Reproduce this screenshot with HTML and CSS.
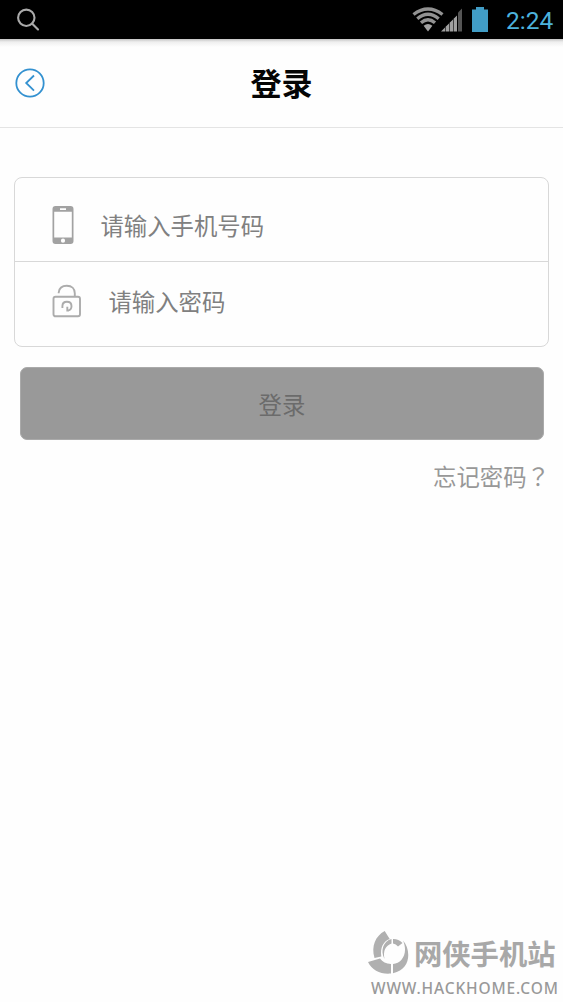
FILE: index.html
```html
<!DOCTYPE html>
<html lang="zh-CN">
<head>
<meta charset="utf-8">
<title>登录</title>
<link rel="stylesheet" href="styles.css">
</head>
<body>
<div class="screen">
  <div class="status">
    <svg class="status-search" width="24" height="24" viewBox="0 0 24 24"><circle cx="10.3" cy="9.8" r="8.2"/><path d="M16 15.5L22 21.5"/></svg>
    <div class="status-right">
      <svg class="wifi" width="32" height="25" viewBox="0 0 32 25"><path d="M1.5 7.5Q16-3.5 30.5 7.5M5.3 11.7Q16 3 26.7 11.7M9 15.8Q16 9.8 23 15.8"/><path class="dot" d="M11.6 18.8Q16 15.2 20.4 18.8L16 24.5Z"/></svg>
      <svg class="signal" width="22" height="25" viewBox="0 0 22 25"><path d="M0 24.5L4 20.5V24.5ZM4.6 19.8L8 16.5V24.5H4.6ZM8.6 15.8L12 12.5V24.5H8.6ZM12.6 11.8L16 8.5V24.5H12.6Z"/><path class="weak" d="M17 5.5L21 1.5V24.5H17Z"/></svg>
      <svg class="battery" width="16" height="25" viewBox="0 0 16 25"><path d="M0 2.5H4V0H12V2.5H16V25H0Z"/></svg>
      <span class="clock">2:24</span>
    </div>
  </div>
  <header class="header">
    <svg class="back" width="30" height="30" viewBox="0 0 30 30"><circle cx="15" cy="15" r="13.7"/><path d="M19 7.5L11.2 15L19 22.6"/></svg>
    <h1 class="title">登录</h1>
  </header>
  <main class="main">
    <div class="fields">
      <div class="field phone-field">
        <svg class="phone" width="22" height="38" viewBox="0 0 22 38"><path fill-rule="evenodd" d="M3.5 0H18.5Q21.5 0 21.5 3V35Q21.5 38 18.5 38H3.5Q.5 38 .5 35V3Q.5 0 3.5 0ZM2.2 5.8V31.5H19.8V5.8ZM8 2.2V3.9H14V2.2ZM11 32.6A2.1 2.1 0 1 0 11 36.8A2.1 2.1 0 1 0 11 32.6Z"/></svg>
        <span class="hint">请输入手机号码</span>
      </div>
      <div class="field password-field">
        <svg class="lock" width="30" height="34" viewBox="0 0 30 34"><rect x="1.5" y="12.7" width="26.5" height="19.6" rx="2"/><path d="M6.7 9.2V8.5C7.2 4 10 1.8 14.8 1.8C20 1.8 22.8 5 22.8 9.2V12.7M10.4 24V22.3C10.4 19.3 12.2 17.8 14.9 17.8C17.8 17.8 19.5 19.6 19.5 22.2C19.5 24.8 18 26.4 15.3 26.6M15.3 22.8V26.6H17"/></svg>
        <span class="hint">请输入密码</span>
      </div>
    </div>
    <div class="button">登录</div>
    <div class="forgot">忘记密码<span class="mark" lang="zh-TW">？</span></div>
  </main>
  <footer class="brand">
    <div class="brand-row">
      <svg class="brand-logo" width="42" height="44" viewBox="0 0 42 44"><path d="M16.7 0L21.7 8C15 10.5 12 17 13.3 25.5L6.5 27C3 15 7.5 5 16.7 0Z"/><path d="M0 31L12 27.5C14.5 31 18 32.8 23 33V42.5C13 43.5 4 39.5 0 31Z"/><path d="M25 33C34 32.5 40.5 22 35 9.5C43 18.5 43.5 38.5 25 42.2Z"/><path d="M16.5 28C12 19.5 15.5 10 23.5 8V12.5C17.5 14.5 14.8 20 16.5 28ZM25 8Q30.5 7.8 34.5 12L30 15.5Q28 13 25 12.6Z"/></svg>
      <span class="brand-name">网侠手机站</span>
    </div>
    <div class="brand-url">WWW.HACKHOME.COM</div>
  </footer>
</div>
</body>
</html>
```
FILE: styles.css
```css
* { box-sizing: border-box; }
body { margin: 0; background: #fefefe; font-family: "Noto Sans CJK SC", sans-serif; }
svg { display: block; flex: none; }
.screen { width: 563px; height: 1002px; display: flex; flex-direction: column; overflow: hidden; }
.status { height: 39px; flex: none; display: flex; justify-content: space-between; align-items: flex-start; padding: 7px 9px 0 16px; background: #000; }
.status-search { margin-top: 1px; fill: none; stroke: #aaa; stroke-width: 2.1; stroke-linecap: round; }
.status-right { display: flex; align-items: flex-start; }
.wifi { fill: none; stroke: #929292; stroke-width: 3.4; }
.wifi .dot { fill: #a2a2a2; stroke: none; }
.signal { fill: #a0a0a0; margin-left: -3px; }
.signal .weak { fill: #555; }
.battery { fill: #419dc6; margin-left: 9px; }
.clock { margin-left: 18px; width: 48px; color: #4cb2dc; font: 24.5px/27px Roboto, sans-serif; white-space: nowrap; }
.header { height: 89px; flex: none; display: grid; grid-template-columns: 30px 1fr 30px; align-items: center; padding: 0 15px; border-bottom: 1px solid #e4e4e4; background: linear-gradient(#c4c4c4 0, #efefef 3px, #fefefe 8px); }
.back { fill: none; stroke: #3391d0; stroke-width: 1.8; }
.title { margin: 0; padding-bottom: 2px; text-align: center; font-size: 31px; line-height: 38px; font-weight: 700; color: #050505; }
.main { padding: 49px 14px 0; }
.fields { height: 170px; border: 1px solid #d8d8d8; border-radius: 8px; background: #fefefe; }
.field { display: flex; align-items: center; padding-left: 37px; }
.phone-field { height: 84px; padding-top: 10px; border-bottom: 1px solid #d8d8d8; }
.phone { fill: #a2a2a2; }
.hint { color: #808080; font-size: 23.4px; line-height: 34px; margin-left: 26.4px; }
.password-field { height: 78px; }
.lock { fill: none; stroke: #acacac; stroke-width: 1.9; }
.button { height: 73px; margin: 20px 5px 0 6px; border-radius: 7px; border: 1px solid #aaa; background: #999; color: #6b6b6b; text-align: center; font-size: 23.4px; line-height: 72px; }
.forgot { margin-top: 19px; margin-right: -1px; text-align: right; color: #989898; font-size: 23.4px; line-height: 34px; }
.mark { font-family: "Noto Sans CJK TC", sans-serif; }
.brand { margin: auto 6px 3px 368px; color: #a8a8a8; }
.brand-row { display: flex; align-items: center; }
.brand-logo { fill: #b0b0b0; }
.brand-name { margin-left: 4px; font-size: 28.3px; line-height: 40px; font-weight: 700; white-space: nowrap; }
.brand-url { margin: 2px 0 0 3px; color: #999; font: 500 15.5px/22px "Noto Sans", sans-serif; letter-spacing: .85px; white-space: nowrap; }
```
